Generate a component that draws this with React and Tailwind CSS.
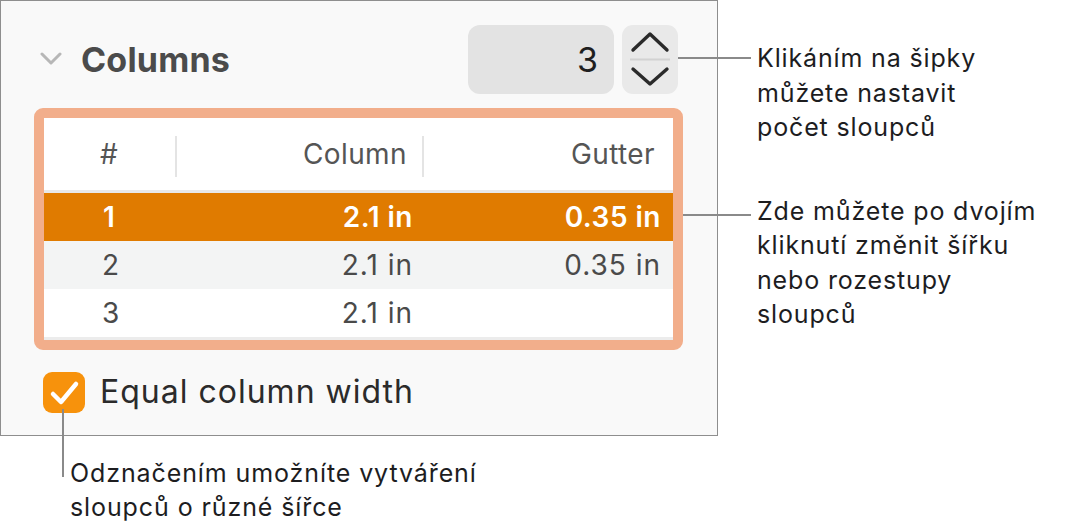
import React from "react";

const font = { fontFamily: "Inter, 'Noto Sans', sans-serif" };

export default function App() {
  return (
    <div
      className="relative flex w-[1077px] h-[529px] bg-white overflow-hidden font-['Inter','Noto_Sans',sans-serif]"
      style={font}
    >
      {/* Left column */}
      <div className="flex flex-col w-[718px] shrink-0">
        <div className="h-[436px] border border-[#8e8e8e] bg-[#f9f9f9] pl-[33px] pr-[33px] pt-[23px]">
          {/* Header row */}
          <div className="flex items-center h-[70px] pr-[6px]">
            <svg width="22" height="14" viewBox="0 0 22 14" className="ml-[6px]">
              <path d="M2 2 L11 11 L20 2" fill="none" stroke="#b7b7b7" strokeWidth="3" strokeLinecap="round" strokeLinejoin="round" />
            </svg>
            <div className="ml-[19px] text-[34px] font-bold text-[#4b4b4b] tracking-[0.2px]">Columns</div>
            <div className="ml-auto flex items-center justify-end w-[146px] h-[69px] rounded-[12px] bg-[#e3e3e3] pr-[16px] text-[34px] text-[#1f1f1f]">
              3
            </div>
            <div className="ml-[8px] w-[56px] h-[69px] rounded-[11px] bg-[#e9e9e9]">
              <svg width="56" height="69" viewBox="0 0 56 69">
                <path d="M11 25 L28 9 L45 25" fill="none" stroke="#2a2a2a" strokeWidth="3.4" strokeLinecap="round" strokeLinejoin="round" />
                <line x1="8" y1="34.5" x2="48" y2="34.5" stroke="#d2d2d2" strokeWidth="2" />
                <path d="M11 44 L28 59 L45 44" fill="none" stroke="#2a2a2a" strokeWidth="3.4" strokeLinecap="round" strokeLinejoin="round" />
              </svg>
            </div>
          </div>

          {/* Table frame */}
          <div className="mt-[14px] w-[649px] border-[10px] border-[#f2ae8b] rounded-[9px] bg-white">
            <div className="flex items-center h-[72px] text-[28px] text-[#555555] tracking-[0.4px]">
              <div className="w-[131px] pl-[56px]">#</div>
              <div className="w-[2px] h-[41px] bg-[#e4e4e4] mt-[4px]" />
              <div className="w-[245px] text-right pr-[15px]">Column</div>
              <div className="w-[2px] h-[41px] bg-[#e4e4e4] mt-[4px]" />
              <div className="flex-1 text-right pr-[18px]">Gutter</div>
            </div>
            <div className="h-[3px] bg-[#e8e8e8]" />
            <div className="flex items-center h-[48px] bg-[#e07b00] text-[28px] font-semibold text-white tracking-[0.5px]">
              <div className="w-[133px] pl-[59px]">1</div>
              <div className="w-[247px] text-right pr-[11px]">2.1 in</div>
              <div className="flex-1 text-right pr-[12px]">0.35 in</div>
            </div>
            <div className="flex items-center h-[48px] bg-[#f3f4f4] text-[28px] text-[#4a4a4a] tracking-[1px]">
              <div className="w-[133px] pl-[58px]">2</div>
              <div className="w-[247px] text-right pr-[11px]">2.1 in</div>
              <div className="flex-1 text-right pr-[12px]">0.35 in</div>
            </div>
            <div className="flex items-center h-[48px] bg-white text-[28px] text-[#4a4a4a] tracking-[1px]">
              <div className="w-[133px] pl-[58px]">3</div>
              <div className="w-[247px] text-right pr-[11px]">2.1 in</div>
              <div className="flex-1" />
            </div>
            <div className="h-[3px] bg-[#ececec]" />
          </div>

          {/* Checkbox row */}
          <div className="mt-[18px] flex items-center pl-[9px]">
            <div className="w-[42px] h-[41px] rounded-[9px] bg-[#f7920c] flex items-center justify-center">
              <svg width="42" height="41" viewBox="0 0 42 41">
                <path d="M10 22 L18 30 L33 12" fill="none" stroke="#ffffff" strokeWidth="4.5" strokeLinecap="round" strokeLinejoin="round" />
              </svg>
            </div>
            <div className="ml-[15px] text-[32px] text-[#2b2b2b] tracking-[1px]">Equal column width</div>
          </div>
        </div>

        {/* Bottom callout */}
        <div className="pl-[70px] pt-[20px] text-[25px] leading-[34px] tracking-[0.9px] text-[#1d1d1f]">
          <div>Odznačením umožníte vytváření</div>
          <div>sloupců o různé šířce</div>
        </div>
      </div>

      {/* Right callouts */}
      <div className="flex flex-col pl-[39px] pt-[41px] text-[25px] leading-[34.5px] tracking-[0.85px] text-[#1d1d1f]">
        <div>
          <div>Klikáním na šipky</div>
          <div>můžete nastavit</div>
          <div>počet sloupců</div>
        </div>
        <div className="mt-[49px]">
          <div>Zde můžete po dvojím</div>
          <div>kliknutí změnit šířku</div>
          <div>nebo rozestupy</div>
          <div>sloupců</div>
        </div>
      </div>

      {/* Leader lines (annotation overlays) */}
      <div className="absolute left-[678px] top-[57px] w-[73px] h-[2px] bg-[#8a8a8a]" />
      <div className="absolute left-[683px] top-[214px] w-[68px] h-[2px] bg-[#8a8a8a]" />
      <div className="absolute left-[62px] top-[409px] w-[2px] h-[68px] bg-[#8a8a8a]" />
    </div>
  );
}
